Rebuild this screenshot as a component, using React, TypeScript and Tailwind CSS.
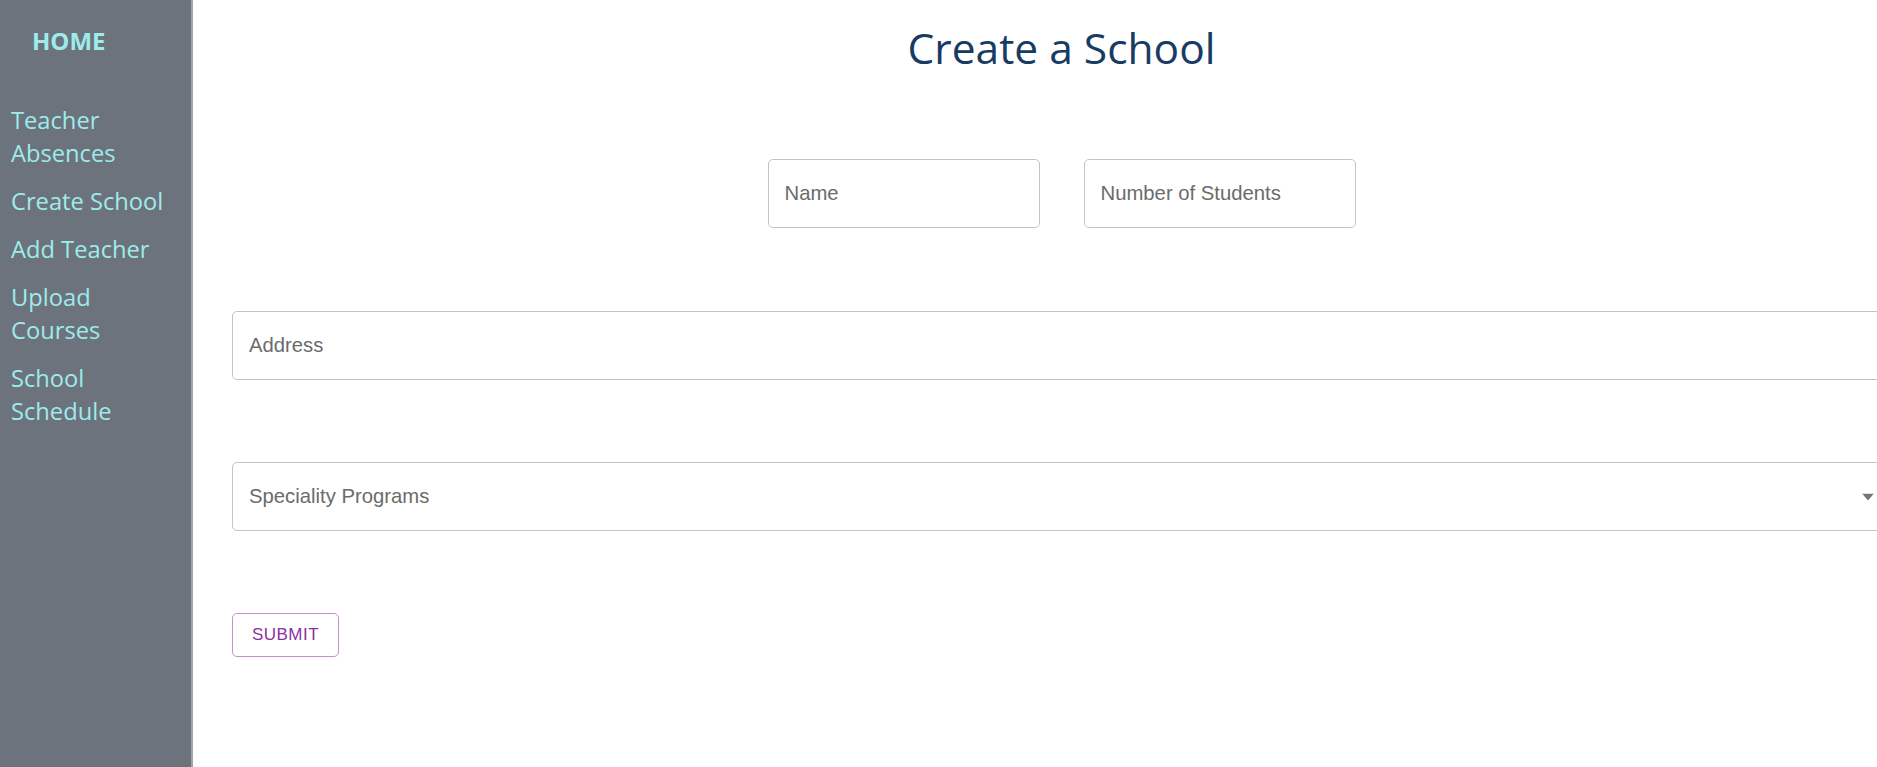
import { ReactNode } from "react";

const navItems = ["Teacher Absences", "Create School", "Add Teacher", "Upload Courses", "School Schedule"];

function Sidebar() {
  return (
    <aside className="h-full w-[193px] shrink-0 border-r-2 border-[#a4a4a4] bg-[#6c737d] font-['Open_Sans',sans-serif] text-[#9eebeb]">
      <div className="pl-[32px] pt-[24px] text-[24px] font-bold leading-[33px]">HOME</div>
      <nav className="mt-[47px] flex flex-col gap-[15px] pl-[11px] pr-[24px]">
        {navItems.map((item) => (
          <a key={item} href="#" className="block text-[23.7px] leading-[33px]">
            {item}
          </a>
        ))}
      </nav>
    </aside>
  );
}

function OutlinedField({ label, className, children }: { label: string; className?: string; children?: ReactNode }) {
  return (
    <div
      className={`relative flex h-[69px] items-center rounded-[5px] border border-[#c4c4c4] bg-white pl-[16px] text-[20.3px] text-[#6b6b6b] ${className ?? ""}`}
    >
      <span>{label}</span>
      {children}
    </div>
  );
}

export default function App() {
  return (
    <div className="flex h-[767px] w-full overflow-hidden bg-white">
      <Sidebar />
      <main className="w-[1737px] shrink-0 px-[39px] font-['Liberation_Sans',Arial,sans-serif]">
        <h1 className="pt-[19px] text-center font-['Open_Sans',sans-serif] text-[42.5px] font-normal leading-[57px] text-[#173b63]">
          Create a School
        </h1>

        <div className="mt-[83px] flex justify-center gap-[44px]">
          <OutlinedField label="Name" className="w-[272px]" />
          <OutlinedField label="Number of Students" className="w-[272px]" />
        </div>

        <OutlinedField label="Address" className="mt-[83px] w-full" />

        <OutlinedField label="Speciality Programs" className="mt-[82px] w-full">
          <svg
            className="absolute right-[16px] top-1/2 -translate-y-1/2"
            width="12"
            height="7"
            viewBox="0 0 12 7"
            aria-hidden="true"
          >
            <path d="M0 0h12L6 7z" fill="#757575" />
          </svg>
        </OutlinedField>

        <button
          type="button"
          className="mt-[82px] flex h-[44px] w-[107px] items-center justify-center rounded-[5px] border border-[#c78fd2] bg-white text-[17px] uppercase tracking-[0.48px] text-[#8e2fa1]"
        >
          Submit
        </button>
      </main>
    </div>
  );
}
